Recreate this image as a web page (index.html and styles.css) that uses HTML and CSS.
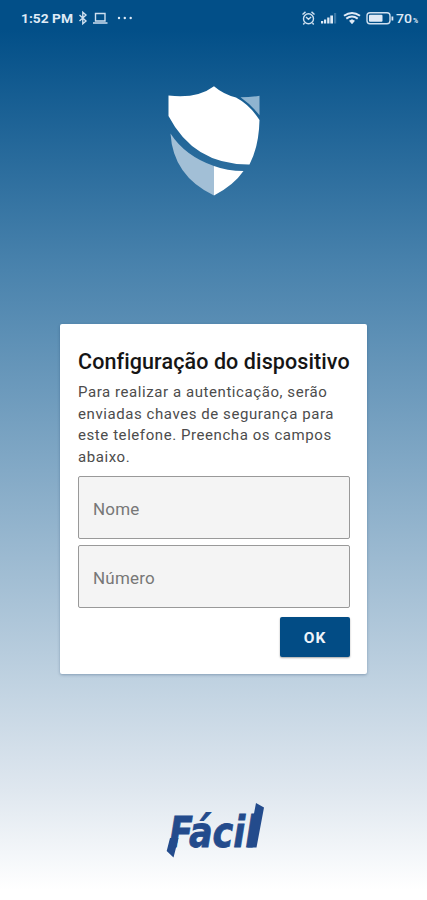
FILE: index.html
```html
<!DOCTYPE html>
<html lang="pt-BR">
<head>
<meta charset="utf-8">
<meta name="viewport" content="width=device-width, initial-scale=1">
<title>Fácil</title>
<link rel="stylesheet" href="styles.css">
</head>
<body>
<div class="screen">
  <header class="status">
    <svg class="status-icons" width="427" height="36" viewBox="0 0 427 36">
      <g fill="#dfeaf6" class="status-text">
        <text x="21" y="23" textLength="52" lengthAdjust="spacingAndGlyphs">1:52 PM</text>
        <text class="level" x="396" y="23" textLength="16" lengthAdjust="spacingAndGlyphs">70</text>
        <text class="percent" x="413" y="23">%</text>
      </g>
      <g fill="none" stroke="#cfe0f0" stroke-width="1.4">
        <path d="M79.500 15l6.500 6-3.200 2.800v-11.600l3.200 2.800-6.500 6"/>
        <path d="M95.500 13.500h9.500v7.500h-9.500zM93 23h14.500"/>
        <circle cx="308.500" cy="18.700" r="5"/>
        <path d="M306 17l2.500 2.300 2.600-2.300M302.500 14.500l3-2.600M314.500 14.500l-3-2.600M304.500 23l-1.200 1.500M312.500 23l1.200 1.500"/>
        <rect x="367" y="12.700" width="23" height="11" rx="3"/>
      </g>
      <g fill="#dfeaf6">
        <circle cx="119" cy="18" r="1.200"/><circle cx="124.800" cy="18" r="1.200"/><circle cx="130.700" cy="18" r="1.200"/>
        <path d="M321 21h2.200v2.500h-2.200zM324 19.500h2.200v4h-2.200zM327.200 17.500h2.300v6h-2.300zM330.300 15.500h2.700v8h-2.700z"/>
        <path opacity=".25" d="M334 13h2.200v10.500H334z"/>
        <rect x="369" y="14.700" width="13.500" height="7" rx="1"/>
        <path d="M391.500 16.500h1.800v4h-1.800zM349 20.800l3-1.600 3 1.600-3 3.500z"/>
      </g>
      <g fill="none" stroke="#dfeaf6" stroke-width="2">
        <path d="M344 15.800q8-5.800 16 0M346.300 18.600q5.700-4.200 11.400 0"/>
      </g>
    </svg>
  </header>
  <svg class="shield" width="94" height="112" viewBox="0 0 94 112">
    <path fill="#fff" d="M1.500 10.500Q30 14 47 1.200Q56 9 69 12.500Q83 20 92.500 35Q92 61 82.500 79.500Q27 80 1.500 31z"/>
    <path fill="#8fb4d0" d="M73.500 12.300q10 0 19-1.500v19.500Q84.500 20 73.500 12.300z"/>
    <path fill="#a2bfd6" d="M3.500 48.500Q18 71 47 81v29.500Q6 91 3.500 48.500z"/>
    <path fill="#fff" d="M47 81q13 5 29.500 5Q67 100 47 110.500z"/>
  </svg>
  <main class="card">
    <h1>Configuração do dispositivo</h1>
    <p>Para realizar a autenticação, serão<br>enviadas chaves de segurança para<br>este telefone. Preencha os campos<br>abaixo.</p>
    <input class="field" type="text" placeholder="Nome" aria-label="Nome">
    <input class="field" type="text" placeholder="Número" aria-label="Número">
    <button class="ok" type="button">OK</button>
  </main>
  <svg class="brand" width="120" height="72" viewBox="-5 0 120 72">
    <g fill="#234b8c">
      <path d="M11 36h8.500l-5 19.500-6.800-6.500zM97 1l8 4.500-7.500 39.900h-9z"/>
      <text class="wordmark" transform="translate(10 45) scale(.815 1)">Fácil</text>
    </g>
  </svg>
</div>
</body>
</html>
```
FILE: styles.css
```css
* { box-sizing: border-box; }
body { margin: 0; font-family: Roboto, sans-serif; }
.screen {
  height: 900px;
  display: flex;
  flex-direction: column;
  align-items: center;
  background: linear-gradient(#024f88 0, #024f88 30px, #4a83ad 270px, #a5c0d5 590px, #dfe7ef 790px, #fff 890px);
  overflow: hidden;
}
.status { height: 36px; width: 427px; }
.status-icons, .shield, .brand { display: block; flex: none; }
.status-text { font: 700 13.500px Roboto, sans-serif; }
.level { font-weight: 500; }
.percent { font-size: 7px; }
.shield { margin-top: 49px; }
.card {
  width: 307px;
  height: 350px;
  margin-top: 127px;
  padding: 24px 17px 17px 18px;
  display: flex;
  flex-direction: column;
  background: #fff;
  border-radius: 2px;
  box-shadow: 0 1px 3px rgba(0, 40, 80, .3);
}
h1 {
  margin: 0;
  font-size: 21.500px;
  line-height: 28px;
  font-weight: 500;
  letter-spacing: .1px;
  white-space: nowrap;
  color: #151515;
}
p {
  margin: 6px 0 7px;
  font-size: 15px;
  line-height: 21.700px;
  letter-spacing: .57px;
  white-space: nowrap;
  color: #4c4c4c;
}
.field {
  width: 100%;
  height: 63px;
  flex: none;
  margin: 0 0 6.500px;
  padding: 3px 14px 0;
  border: 1px solid #999;
  border-radius: 2px;
  background: #f4f4f4;
  font: 400 17px Roboto, sans-serif;
  letter-spacing: .2px;
}
.field::placeholder { color: #777; opacity: 1; }
.ok {
  align-self: flex-end;
  width: 70px;
  height: 40px;
  flex: none;
  margin-top: 2px;
  padding: 2px 0 0;
  border: 0;
  border-radius: 2px;
  background: #024c85;
  color: #eef4fa;
  font: 700 15.500px Roboto, sans-serif;
  letter-spacing: 1px;
  box-shadow: 0 1px 2px rgba(0, 0, 0, .35);
}
.brand { margin-top: 128px; }
.wordmark {
  font: italic 700 43px "DejaVu Sans", sans-serif;
  stroke: #234b8c;
  stroke-width: .8px;
}
```
